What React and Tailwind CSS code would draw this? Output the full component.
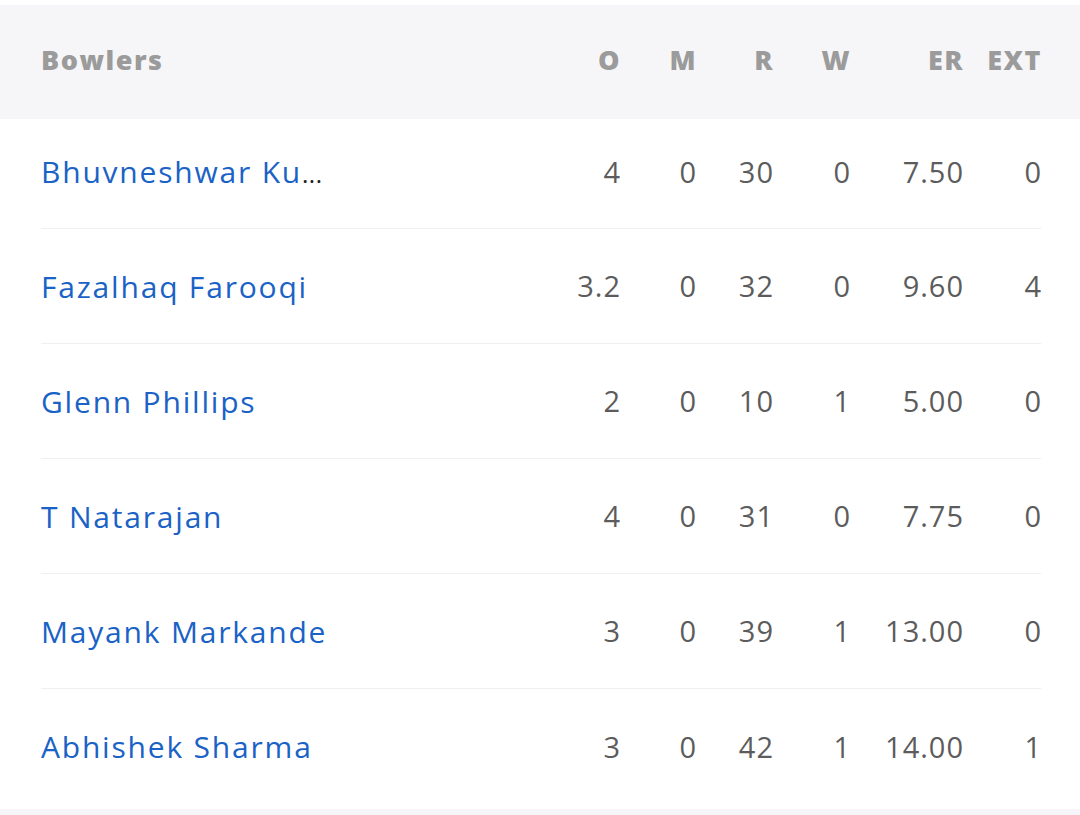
import React from "react";

const bowlers = [
  { name: "Bhuvneshwar Ku", more: true, o: "4", m: "0", r: "30", w: "0", er: "7.50", ext: "0" },
  { name: "Fazalhaq Farooqi", o: "3.2", m: "0", r: "32", w: "0", er: "9.60", ext: "4" },
  { name: "Glenn Phillips", o: "2", m: "0", r: "10", w: "1", er: "5.00", ext: "0" },
  { name: "T Natarajan", o: "4", m: "0", r: "31", w: "0", er: "7.75", ext: "0" },
  { name: "Mayank Markande", o: "3", m: "0", r: "39", w: "1", er: "13.00", ext: "0" },
  { name: "Abhishek Sharma", o: "3", m: "0", r: "42", w: "1", er: "14.00", ext: "1" },
];

const cols = "grid grid-cols-[1fr_80px_76px_77px_77px_113px_78px] items-center";

const App = () => {
  return (
    <div className="w-[1080px] h-[815px] bg-white pt-[5px] overflow-hidden font-['Open_Sans',sans-serif]">
      {/* Header */}
      <div className="bg-[#f6f6f8] h-[114px] pl-[41px] pr-[38px] pb-[4px]">
        <div className={`${cols} h-full text-[27px] font-extrabold text-[#9b9b9b] tracking-[1.5px]`}>
          <div>Bowlers</div>
          <div className="text-right">O</div>
          <div className="text-right">M</div>
          <div className="text-right">R</div>
          <div className="text-right">W</div>
          <div className="text-right">ER</div>
          <div className="text-right">EXT</div>
        </div>
      </div>

      {/* Rows */}
      <div className="pl-[41px] pr-[39px]">
        {bowlers.map((b, i) => {
          const last = i === bowlers.length - 1;
          const height = i === 0 ? "h-[110px] pb-[4px]" : last ? "h-[120px] pb-[5px]" : "h-[115px]";
          return (
            <div
              key={b.name}
              className={`${cols} ${height} ${
                last ? "" : "border-b border-[#f0f0f0]"
              } text-[29px] text-[#5c5c5c]`}
            >
              <div className="whitespace-nowrap">
                <span className="text-[#1a62c6] text-[30px] font-medium tracking-[1.8px]">{b.name}</span>
                {b.more && <span className="text-[#222] text-[24px] tracking-[0.5px]">...</span>}
              </div>
              <div className="text-right tracking-[1px] -mr-[1px]">{b.o}</div>
              <div className="text-right tracking-[1px] -mr-[1px]">{b.m}</div>
              <div className="text-right tracking-[1px] -mr-[1px]">{b.r}</div>
              <div className="text-right tracking-[1px] -mr-[1px]">{b.w}</div>
              <div className="text-right tracking-[1px] -mr-[1px]">{b.er}</div>
              <div className="text-right tracking-[1px] -mr-[1px]">{b.ext}</div>
            </div>
          );
        })}
      </div>

      <div className="bg-[#f6f6fa] h-[6px]" />
    </div>
  );
};

export default App;
